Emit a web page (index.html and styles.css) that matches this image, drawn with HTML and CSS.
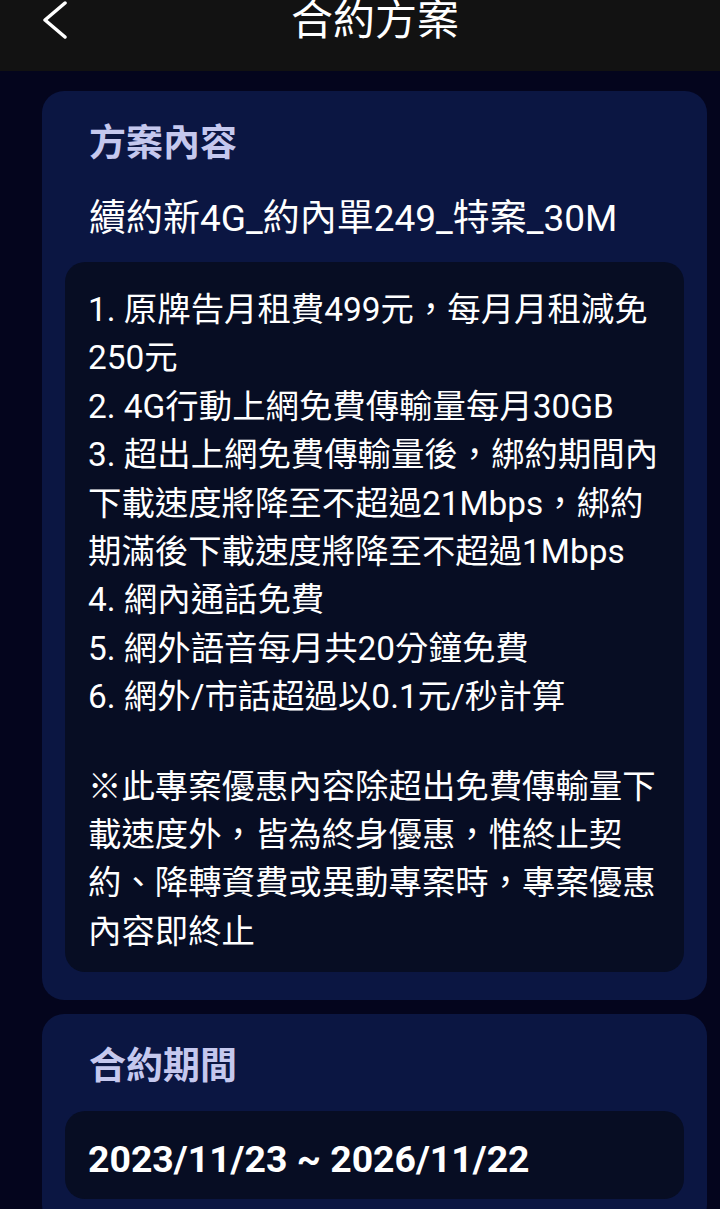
FILE: index.html
```html
<!DOCTYPE html>
<html lang="zh-Hant">
<head>
  <meta charset="UTF-8" />
  <meta name="viewport" content="width=device-width, initial-scale=1.0"/>
  <title>合約方案</title>
  <link rel="stylesheet" href="styles.css">
</head>
<body>

  <!-- 標題列 -->
  <header class="topbar">
    <a class="back" href="#" aria-label="返回">
      <svg width="26" height="40" viewBox="0 0 26 40">
        <path d="M22 3 L2 20 L22 37" fill="none" stroke="#fff" stroke-width="3.5" stroke-linecap="round" stroke-linejoin="round"/>
      </svg>
    </a>
    <h1 class="title">合約方案</h1>
  </header>

  <main class="content">

    <!-- 方案內容 -->
    <section class="card">
      <h2 class="card-title">方案內容</h2>
      <p class="plan-name">續約新4G_約內單249_特案_30M</p>
      <div class="panel">
        <ol class="terms">
          <li>1. 原牌告月租費499元，每月月租減免250元</li>
          <li>2. 4G行動上網免費傳輸量每月30GB</li>
          <li>3. 超出上網免費傳輸量後，綁約期間內下載速度將降至不超過21Mbps，綁約期滿後下載速度將降至不超過1Mbps</li>
          <li>4. 網內通話免費</li>
          <li>5. 網外語音每月共20分鐘免費</li>
          <li>6. 網外/市話超過以0.1元/秒計算</li>
        </ol>
        <p class="note">※此專案優惠內容除超出免費傳輸量下載速度外，皆為終身優惠，惟終止契約、降轉資費或異動專案時，專案優惠內容即終止</p>
      </div>
    </section>

    <!-- 合約期間 -->
    <section class="card">
      <h2 class="card-title">合約期間</h2>
      <div class="panel panel-date">
        <p class="period">2023/11/23 ~ 2026/11/22</p>
      </div>
    </section>

  </main>

</body>
</html>
```

FILE: styles.css
```css
html, body {
  margin: 0;
  background-color: #04051d;
  font-family: Roboto, "Noto Sans CJK TC", sans-serif;
  color: #fff;
}

.topbar {
  height: 71px;
  background-color: #121212;
  padding-left: 30px;
  display: grid;
  grid-template-columns: 1fr auto 1fr;
  align-items: start;
}

.back {
  display: block;
  width: 26px;
  height: 40px;
  margin-left: 13px;
}

.back svg {
  display: block;
}

.title {
  margin: 0;
  font-size: 42px;
  font-weight: 400;
  line-height: 42px;
}

.content {
  padding: 20px 13px 0 42px;
  display: flex;
  flex-direction: column;
  gap: 14px;
}

.card {
  background-color: #0b1642;
  border-radius: 22px;
  padding: 30px 23px 28px;
}

.card-title {
  margin: 0;
  font-size: 37px;
  font-weight: 700;
  line-height: 46px;
  color: #c5c8ee;
  padding-left: 24px;
}

.plan-name {
  margin: 28px 0 19px;
  font-size: 37px;
  line-height: 48px;
  padding-left: 24px;
}

.panel {
  background-color: #070d23;
  border-radius: 20px;
  padding: 24px 23px 16px;
}

.terms {
  list-style: none;
  margin: 0;
  padding: 0;
}

.terms li,
.note {
  font-size: 33.4px;
  line-height: 48.4px;
}

.note {
  margin: 41px 0 0;
}

.card-title + .panel {
  margin-top: 21px;
}

.panel-date {
  padding: 24px 23px 16px;
}

.period {
  margin: 0;
  font-size: 37.4px;
  font-weight: 700;
  line-height: 48px;
}
```
